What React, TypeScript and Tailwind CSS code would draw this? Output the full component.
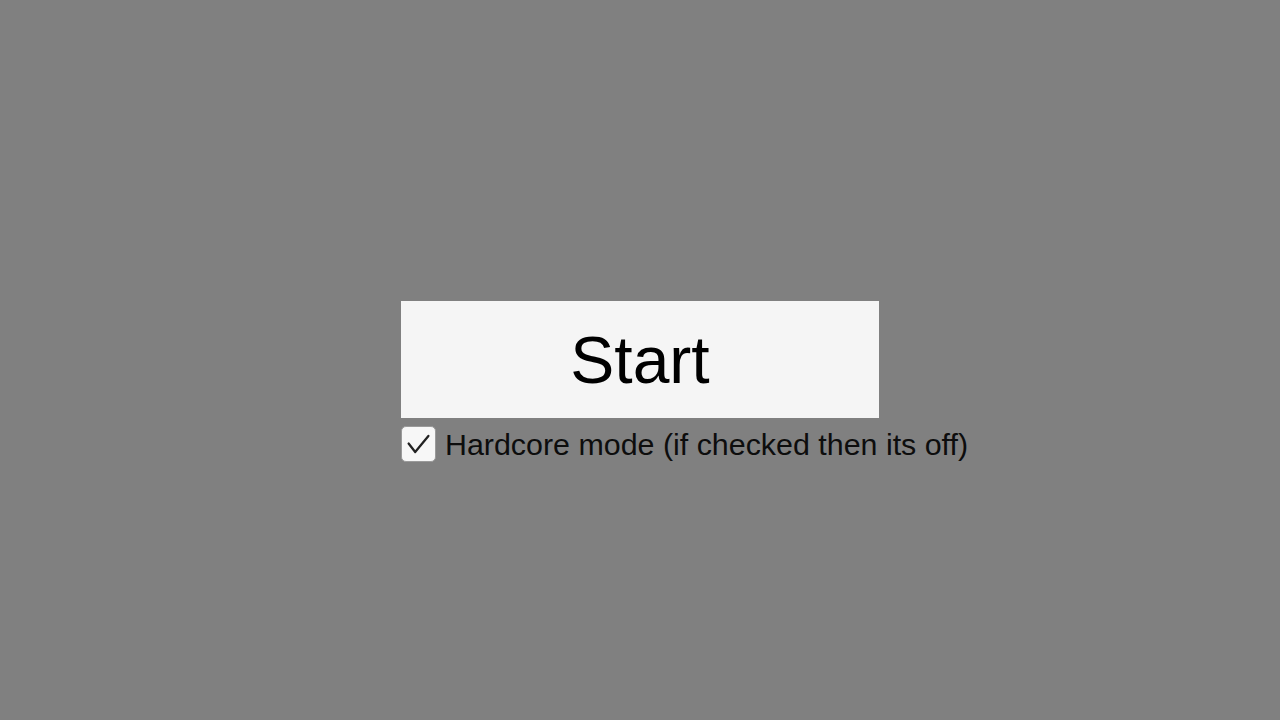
import React from 'react';

const App: React.FC = () => {
  return (
    <div
      className="w-full h-[720px] bg-[#808080] flex flex-col items-center pt-[301px]"
      style={{ fontFamily: '"Liberation Sans", Arial, sans-serif' }}
    >
      <div className="w-[478px] flex flex-col">
        <button className="w-[478px] h-[117px] bg-[#f5f5f5] text-black text-[66px] leading-none flex items-center justify-center">
          Start
        </button>
        {/* Hardcore toggle */}
        <label className="mt-[8px] flex items-center gap-[9px] whitespace-nowrap">
          <span className="w-[35px] h-[36px] rounded-[5px] bg-[#f7f7f7] border border-[#9a9a9a] flex items-center justify-center shrink-0">
            <svg width="35" height="36" viewBox="0 0 35 36" fill="none">
              <path d="M7 17.5 L14 26.5 L28 9.5" stroke="#222" strokeWidth="2.4" strokeLinecap="round" strokeLinejoin="round" />
            </svg>
          </span>
          <span className="text-[30.4px] leading-none text-[#0d0d0d]">Hardcore mode (if checked then its off)</span>
        </label>
      </div>
    </div>
  );
};

export default App;
